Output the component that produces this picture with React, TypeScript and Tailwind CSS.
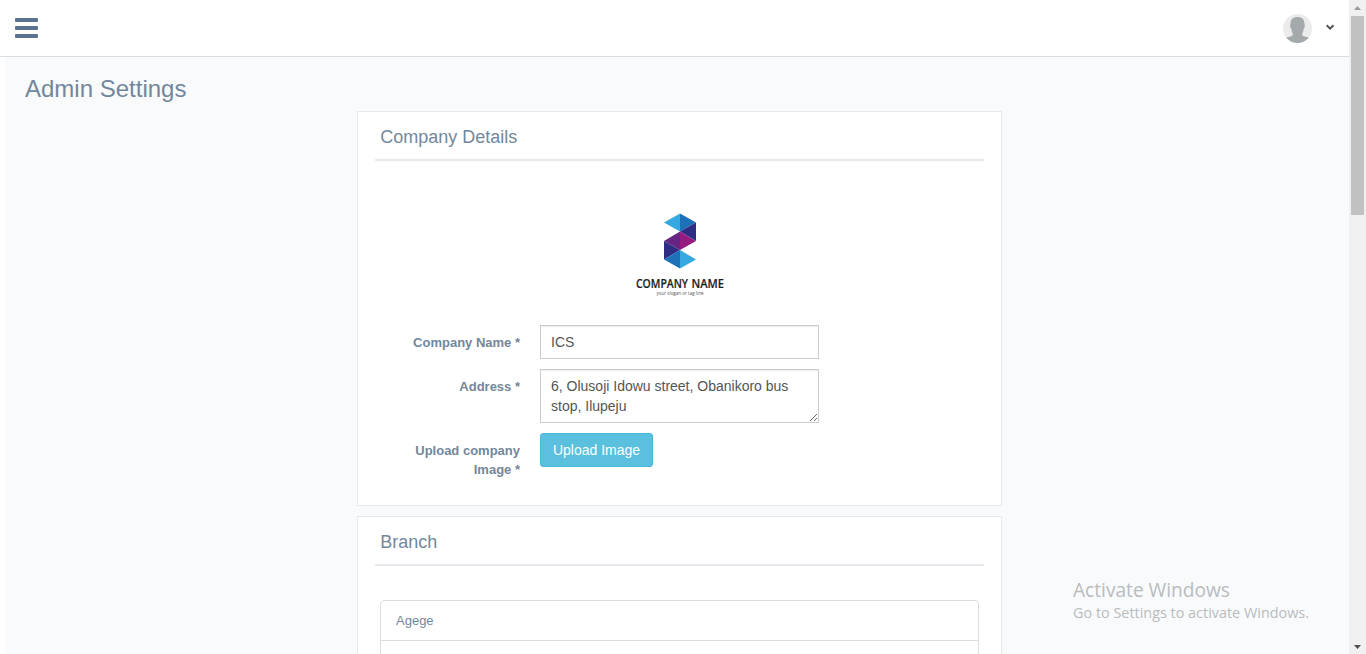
import type { ReactNode } from "react";

function Panel({ title, className, children }: { title: string; className: string; children: ReactNode }) {
  return (
    <section className={"w-[645px] border border-[#e6e9ed] bg-white px-[17px] " + className}>
      <h2 className="h-[49px] w-[609px] border-b-2 border-[#e6e9ed] pl-[5.2px] pt-[13px] text-[18px] leading-[24px]">{title}</h2>
      {children}
    </section>
  );
}

function CompanyLogo() {
  return (
    <svg width="100" height="100" viewBox="0 0 100 100" className="shrink-0 overflow-visible" aria-label="Company logo">
      <path d="M34 20.500 50 11.500V29.500Z" fill="#35a8e0" />
      <path d="M50 11.500 66 20.500 50 29.500Z" fill="#1d71b8" />
      <path d="M66 20.500V39L50 29.500Z" fill="#2d2e83" />
      <path d="M50 29.500V48L34 39Z" fill="#662483" />
      <path d="M50 29.500 66 39 50 48Z" fill="#951b81" />
      <path d="M34 39 50 48 34 57.500Z" fill="#2d2e83" />
      <path d="M34 57.500 50 48V66.500Z" fill="#1d71b8" />
      <path d="M50 48 66 57.500 50 66.500Z" fill="#35a8e0" />
      <g fontFamily="Open Sans, sans-serif" fontSize="12.500" fontWeight="600" fill="#1c1c1c" stroke="#1c1c1c" strokeWidth="0.2">
        <text x="6" y="86.200" textLength="52" lengthAdjust="spacingAndGlyphs">COMPANY</text>
        <text x="61.500" y="86.200" textLength="32.500" lengthAdjust="spacingAndGlyphs">NAME</text>
      </g>
      <text x="26.500" y="93.200" textLength="47" lengthAdjust="spacingAndGlyphs" fontFamily="Open Sans, sans-serif" fontSize="5.500" fill="#555">your slogan or tag line</text>
    </svg>
  );
}

function Avatar() {
  return (
    <svg width="29" height="29" viewBox="0 0 29 29">
      <defs>
        <clipPath id="avatar-circle"><circle cx="14.500" cy="14.500" r="14.500" /></clipPath>
      </defs>
      <g clipPath="url(#avatar-circle)">
        <rect width="29" height="29" fill="#ebebeb" />
        <path d="M14.500 3C10 3 7.500 5.500 7.500 10C6.800 10.800 7.200 14.200 8.300 14.800C8.600 17 9 18.500 9.700 19.500V21.500C8 22.600 5 22.700 2.500 24V29H26.500V24C24 22.700 21 22.600 19.300 21.500V19.500C20 18.500 20.400 17 20.700 14.800C21.800 14.200 22.200 10.800 21.500 10C21.500 5.500 19 3 14.500 3Z" fill="#a4a9ac" />
      </g>
    </svg>
  );
}

function ScrollTrack() {
  return (
    <div className="flex h-full w-[17px] shrink-0 flex-col items-center bg-[#f0f0f0]">
      <svg width="17" height="16" viewBox="0 0 17 16"><path d="M5 10 8.500 6 12 10Z" fill="#9b9b9b" /></svg>
      <div className="h-[199px] w-[13px] bg-[#c1c1c1]" />
      <svg width="17" height="16" viewBox="0 0 17 16" className="mt-auto"><path d="M5 7H12L8.500 11Z" fill="#505050" /></svg>
    </div>
  );
}

const fieldClass = "block w-[279px] rounded-none border border-[#ccc] bg-white px-[10px] py-[6px] text-[14px] leading-[20px] text-[#555] shadow-[inset_0_1px_1px_rgba(0,0,0,0.075)] outline-none";

export default function App() {
  return (
    <div className="relative flex h-[654px] w-[1366px] overflow-hidden bg-white font-['Liberation_Sans',Arial,sans-serif] text-[#73879c]">
      <div className="flex min-w-0 flex-1 flex-col">
        <header className="flex h-[57px] shrink-0 items-start justify-between border-b border-[#d9dee4] bg-white pl-[15px] pr-[14px]">
          <button aria-label="Toggle menu" className="mt-[18px] flex flex-col gap-[4px]">
            <span className="h-[4px] w-[23px] rounded-[1px] bg-[#5a738e]" />
            <span className="h-[4px] w-[23px] rounded-[1px] bg-[#5a738e]" />
            <span className="h-[4px] w-[23px] rounded-[1px] bg-[#5a738e]" />
          </button>
          <button aria-label="Account" className="mt-[14px] flex gap-[14px]">
            <Avatar />
            <svg width="9" height="7" viewBox="0 0 9 7" className="mt-[10px]"><path d="M0.700 1.300 4.100 4.600 7.500 1.300" fill="none" stroke="#515356" strokeWidth="2" /></svg>
          </button>
        </header>
        <main className="ml-[5px] min-h-0 flex-1 overflow-hidden bg-[#f8fafc] pl-[20px]">
          <h1 className="h-[54px] pt-[17px] text-[24px] leading-[30px]">Admin Settings</h1>
          <div className="flex flex-col gap-[10px] pl-[332px]">
            <Panel title="Company Details" className="h-[395px] shrink-0">
              <div className="flex justify-center pl-[1px] pt-[41px]"><CompanyLogo /></div>
              <form className="mt-[23px] grid grid-cols-[145px_279px] gap-x-[20px] gap-y-[10px] text-[13px] leading-[19px]">
                <label htmlFor="company" className="pt-[8px] text-right font-bold">Company Name *</label>
                <input id="company" className={fieldClass + " h-[34px]"} defaultValue="ICS" />
                <label htmlFor="address" className="pt-[8px] text-right font-bold">Address *</label>
                <textarea id="address" className={fieldClass + " h-[54px] resize overflow-auto"} defaultValue="6, Olusoji Idowu street, Obanikoro bus stop, Ilupeju" />
                <span className="pl-[25px] pt-[8px] text-right font-bold">Upload company Image *</span>
                <button type="button" className="h-[34px] w-[113px] rounded-[3px] border border-[#46b8da] bg-[#5bc0de] text-[14px] leading-[20px] text-white">Upload Image</button>
              </form>
            </Panel>
            <Panel title="Branch" className="h-[300px] shrink-0">
              <ul className="ml-[5px] mt-[34px] w-[599px] rounded-t-[4px] border border-[#ddd] text-[13px] leading-[19px]">
                <li className="h-[40px] border-b border-[#ddd] px-[15px] py-[10px]">Agege</li>
                <li className="h-[40px]" />
              </ul>
            </Panel>
          </div>
        </main>
      </div>
      <ScrollTrack />
      <div className="pointer-events-none absolute left-[1073px] top-[577px] whitespace-nowrap font-['Open_Sans','Noto_Sans',sans-serif] text-[#b9bcbe]">
        <svg width="240" height="48" viewBox="0 0 240 48" className="block fill-current">
          <text x="0" y="20" fontSize="19.500" textLength="157" lengthAdjust="spacingAndGlyphs">Activate Windows</text>
          <text x="0" y="41" fontSize="14" textLength="236" lengthAdjust="spacingAndGlyphs">Go to Settings to activate Windows.</text>
        </svg>
      </div>
    </div>
  );
}
